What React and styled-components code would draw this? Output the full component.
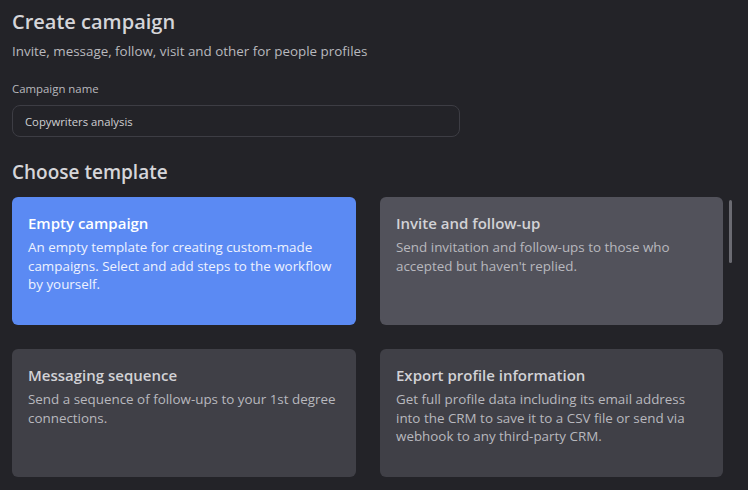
import React from 'react'
import styled, { createGlobalStyle } from 'styled-components'

const GlobalStyle = createGlobalStyle`
    html, body {
        margin: 0;
        background: #232328;
    }
    body {
        font-family: "Open Sans", Lato, sans-serif;
        -webkit-font-smoothing: antialiased;
    }
`

const Page = styled.div`
    position: relative;
    width: 748px;
    height: 490px;
    overflow: hidden;
    padding: 10px 12px 0;
    box-sizing: border-box;
    color: #d8d8dc;
`

const Title = styled.h1`
    margin: 0;
    font-size: 20px;
    line-height: 24px;
    font-weight: 600;
    color: #d5d5d9;
`

const Subtitle = styled.p`
    margin: 8px 0 0;
    font-size: 13.4px;
    line-height: 18px;
    color: #b9b9be;
`

const Label = styled.label`
    display: block;
    margin-top: 22px;
    font-size: 11.4px;
    line-height: 14px;
    color: #b9b9be;
`

const Input = styled.input`
    display: block;
    box-sizing: border-box;
    width: 448px;
    height: 32px;
    margin-top: 9px;
    padding: 0 12px;
    border: 1px solid #3d3d44;
    border-radius: 8px;
    background: #232328;
    font-family: inherit;
    font-size: 11.3px;
    color: #cfcfd3;
    outline: none;
`

const SectionTitle = styled.h2`
    margin: 23px 0 0;
    font-size: 19px;
    line-height: 24px;
    font-weight: 600;
    color: #d5d5d9;
`

const Grid = styled.div`
    display: grid;
    grid-template-columns: 344px 343px;
    gap: 24px;
    margin-top: 13px;
`

const Card = styled.div`
    box-sizing: border-box;
    height: 128px;
    padding: 16px 16px 0;
    border-radius: 6px;
    background: ${p => p.$tone === 'active' ? '#5b8af3' : p.$tone === 'hover' ? '#52525b' : '#404047'};
`

const CardTitle = styled.h3`
    margin: 0;
    font-size: 15px;
    line-height: 20px;
    font-weight: 600;
    color: ${p => p.$active ? '#ffffff' : '#d2d2d6'};
`

const CardText = styled.p`
    margin: 5px 0 0;
    font-size: 13.4px;
    line-height: 18.5px;
    color: ${p => p.$active ? '#eef2ff' : '#b8b8be'};
`

const ScrollThumb = styled.div`
    position: absolute;
    left: 729px;
    top: 200px;
    width: 3px;
    height: 63px;
    border-radius: 2px;
    background: #6b6b72;
`

const templates = [
    {
        title: 'Empty campaign',
        text: 'An empty template for creating custom-made campaigns. Select and add steps to the workflow by yourself.',
        tone: 'active',
    },
    {
        title: 'Invite and follow-up',
        text: "Send invitation and follow-ups to those who accepted but haven't replied.",
        tone: 'hover',
    },
    {
        title: 'Messaging sequence',
        text: 'Send a sequence of follow-ups to your 1st degree connections.',
        tone: 'idle',
    },
    {
        title: 'Export profile information',
        text: 'Get full profile data including its email address into the CRM to save it to a CSV file or send via webhook to any third-party CRM.',
        tone: 'idle',
    },
]

function App() {
    return (
        <Page>
            <GlobalStyle />
            <Title>Create campaign</Title>
            <Subtitle>Invite, message, follow, visit and other for people profiles</Subtitle>
            <Label htmlFor="campaign-name">Campaign name</Label>
            <Input id="campaign-name" defaultValue="Copywriters analysis" />
            <SectionTitle>Choose template</SectionTitle>
            <Grid>
                {templates.map(t => (
                    <Card key={t.title} $tone={t.tone}>
                        <CardTitle $active={t.tone === 'active'}>{t.title}</CardTitle>
                        <CardText $active={t.tone === 'active'}>{t.text}</CardText>
                    </Card>
                ))}
            </Grid>
            <ScrollThumb />
        </Page>
    )
}

export default App
